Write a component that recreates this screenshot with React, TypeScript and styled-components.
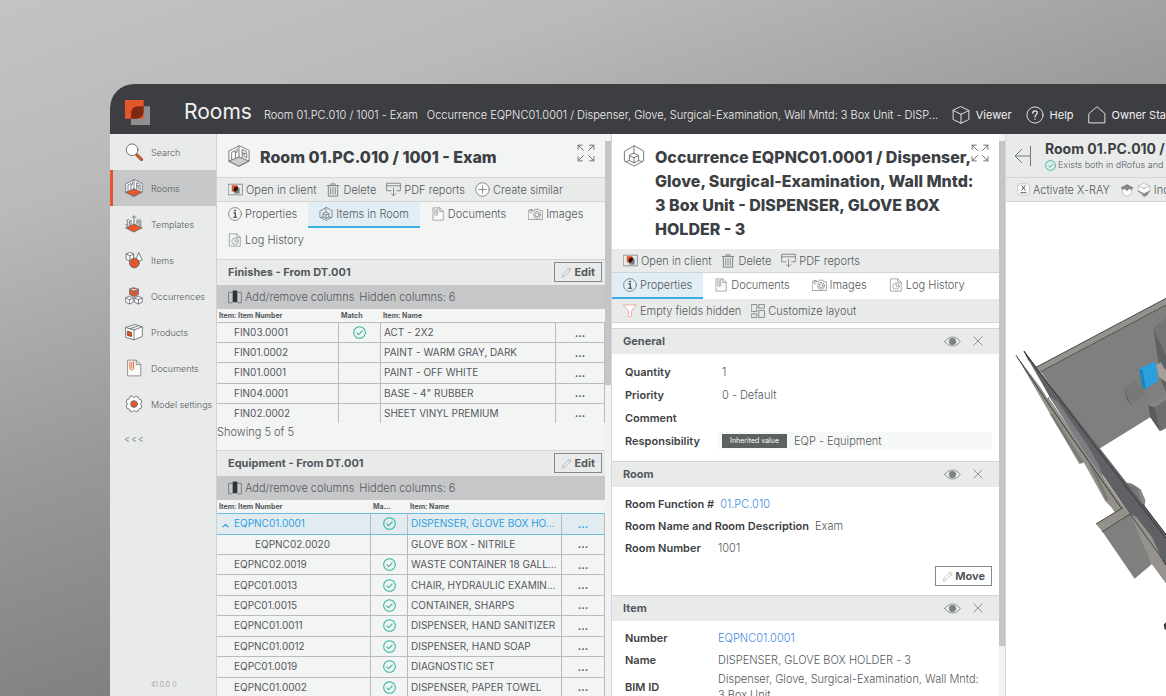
import React from "react";
import styled, { createGlobalStyle, css } from "styled-components";

const c = {
  ink: "#3c3f43",
  text: "#54585c",
  light: "#f3f4f4",
  bar: "#e9ebeb",
  strong: "#c6c7c9",
  line: "#d3d5d5",
  orange: "#e5572a",
  blue: "#2f9fe0",
  link: "#3f8ae0",
  green: "#2fb59c",
};

const Global = createGlobalStyle`
  * { box-sizing: border-box; }
  body {
    margin: 0;
    font-family: Inter, "Liberation Sans", sans-serif;
    font-size: 11px;
    font-weight: 300;
    color: ${c.text};
    overflow: hidden;
  }
  h1, h2, h3, p, dl, dd, dt { margin: 0; }
  button { font: inherit; color: inherit; background: none; border: 0; padding: 0; }
  a { text-decoration: none; color: inherit; }
  svg { display: block; flex: none; }
`;

const Backdrop = styled.div`
  height: 100vh;
  padding: 84px 0 0 110px;
  background: linear-gradient(161deg, #c3c3c3, #bababa 19%, #999 44%, #808080 67%, #606060);
`;
const Window = styled.main`
  height: 100%;
  display: flex;
  flex-direction: column;
  border-top-left-radius: 24px;
  overflow: hidden;
  background: ${c.light};
`;

/* Header */
const Header = styled.header`
  flex: none;
  height: 50px;
  padding: 12px 0 0 15px;
  display: flex;
  align-items: center;
  background: #3d3e41;
  color: #f1f1f1;
  font-size: 11px;
  font-weight: 400;
  white-space: nowrap;
`;
const Brand = styled.div`
  display: flex;
  align-items: center;
  gap: 34px;
  padding-bottom: 6px;
  margin-right: 12px;
`;
const AppName = styled.h1`
  font-size: 21px;
  line-height: 24px;
  font-weight: 400;
`;
const Crumb = styled.a<{ $grow?: boolean }>`
  margin-right: 9px;
  line-height: 16px;
  font-weight: 300;
  ${(p) =>
    p.$grow &&
    css`
      flex: 1 1 0;
      min-width: 0;
    `}
`;
const HeaderNav = styled.nav`
  flex: none;
  display: flex;
  gap: 14px;
`;
const HeaderLink = styled.a`
  display: flex;
  align-items: center;
  gap: 6px;
`;

/* Body */
const Body = styled.div`
  flex: 1;
  min-height: 0;
  display: grid;
  grid-template-columns: 107px minmax(0, 395fr) minmax(0, 394fr) minmax(0, 160fr);
  grid-template-rows: minmax(0, 1fr);
`;
const Sidebar = styled.nav`
  display: flex;
  flex-direction: column;
  background: ${c.bar};
  font-size: 9px;
  border-right: 1px solid #cfd0d1;
`;
const SideLink = styled.a<{ $active?: boolean }>`
  height: 36px;
  padding-left: 12px;
  border-left: 3px solid ${(p) => (p.$active ? c.orange : "transparent")};
  background: ${(p) => (p.$active ? c.strong : "none")};
  display: flex;
  align-items: center;
  gap: 8px;
  white-space: nowrap;
`;
const Collapse = styled.button`
  align-self: flex-start;
  margin: 8px 0 0 14px;
  line-height: 18px;
  letter-spacing: 1px;
`;
const Version = styled.p`
  margin: auto 0 6px 41px;
  font-size: 7px;
  line-height: 10px;
  color: #8f9294;
`;

const Panel = styled.section<{ $white?: boolean }>`
  position: relative;
  display: flex;
  min-height: 0;
  overflow: hidden;
  background: ${(p) => (p.$white ? "#fff" : c.light)};
`;
const PanelContent = styled.div`
  flex: 1;
  min-width: 0;
`;
const Track = styled.div`
  flex: none;
  width: 7px;
  padding-top: 7px;
  background: #f1f2f2;
  border-right: 1px solid #d5d6d7;
`;
const Thumb = styled.div<{ $size: number }>`
  height: ${(p) => p.$size}%;
  background: #c3c5c6;
`;
const TitleRow = styled.div<{ $ruled?: boolean }>`
  display: flex;
  align-items: flex-start;
  gap: 10px;
  padding: 11px 20px 8px 11px;
  ${(p) => p.$ruled && `border-bottom: 1px solid ${c.line};`}
`;
const Title = styled.h2`
  font-size: 16px;
  line-height: 24px;
  font-weight: 800;
  color: ${c.ink};
`;
const Expand = styled.button`
  position: absolute;
  top: 10px;
  right: 17px;
`;
const Toolbar = styled.div`
  height: 24px;
  padding: 0 11px;
  display: flex;
  align-items: center;
  gap: 10px;
  background: ${c.bar};
  border-bottom: 1px solid ${c.line};
  white-space: nowrap;
`;
const Tool = styled.button`
  display: flex;
  align-items: center;
  gap: 3px;
`;
const Tabs = styled.div<{ $last?: boolean }>`
  display: flex;
  flex-wrap: wrap;
  ${(p) => !p.$last && "padding-bottom: 5px;"}
`;
const Tab = styled.button<{ $active?: boolean }>`
  height: 26px;
  padding: 0 11px;
  display: flex;
  align-items: center;
  gap: 3px;
  border-bottom: 2px solid ${(p) => (p.$active ? "#3aaee0" : "transparent")};
  background: ${(p) => (p.$active ? "#e1eef5" : "none")};
`;
const SectionHead = styled.div`
  height: 26px;
  padding: 0 3px 1px 11px;
  display: flex;
  align-items: center;
  justify-content: space-between;
  background: ${c.bar};
  border-top: 1px solid ${c.line};
`;
const SectionTitle = styled.h3`
  font-size: 11px;
  font-weight: 700;
`;
const Outlined = styled.button<{ $white?: boolean }>`
  height: 20px;
  padding: 0 6px;
  display: flex;
  align-items: center;
  gap: 2px;
  border: 1px solid #85898b;
  background: ${(p) => (p.$white ? "#fff" : "none")};
  font-weight: 700;
`;
const ColumnBar = styled.div`
  height: 24px;
  padding: 0 11px;
  display: flex;
  align-items: center;
  gap: 5px;
  background: ${c.strong};
`;

/* Table */
const Grid = styled.table<{ $height: number }>`
  width: 100%;
  height: ${(p) => p.$height}px;
  table-layout: fixed;
  border-collapse: separate;
  border-spacing: 0;
  font-size: 10px;
  font-weight: 400;
`;
const Th = styled.th`
  height: 13px;
  padding: 0 2px;
  font-size: 7px;
  line-height: 12px;
  font-weight: 700;
  text-align: left;
  white-space: nowrap;
`;
const Td = styled.td<{ $kind?: "code" | "child" | "mid" }>`
  padding: 0 0 1px 3px;
  border-top: 1px solid #b9bbbc;
  border-right: 1px solid #b9bbbc;
  line-height: 16px;
  white-space: nowrap;
  ${(p) => p.$kind === "code" && "padding-left: 17px;"}
  ${(p) => p.$kind === "child" && "padding-left: 38px;"}
  ${(p) => p.$kind === "mid" && "padding: 0; text-align: center; svg { margin: 0 auto; }"}
`;
const More = styled.button`
  font-size: 11px;
  font-weight: 600;
`;
const Tr = styled.tr<{ $selected?: boolean }>`
  ${(p) =>
    p.$selected &&
    css`
      background: #e1ebf0;
      color: ${c.blue};
      ${Td} {
        border-top-color: #6dbbe4;
        border-bottom: 1px solid #6dbbe4;
      }
      & + tr ${Td} {
        border-top: 0;
      }
    `}
`;
const Toggle = styled.button`
  float: left;
  margin: 7px 0 0 -12px;
`;
const Count = styled.p`
  margin-bottom: 9px;
  line-height: 18px;
`;

/* Fields */
const Spacer = styled.div`
  height: 5px;
`;
const HeadActions = styled.div`
  display: flex;
  align-items: center;
  gap: 12px;
  padding-right: 13px;
`;
const Fields = styled.dl<{ $row: number }>`
  padding: 6px 7px 0 13px;
  --row: ${(p) => p.$row}px;
`;
const Field = styled.div`
  min-height: var(--row);
  display: flex;
  align-items: center;
  gap: 6px;
`;
const Label = styled.dt`
  min-width: 87px;
  font-weight: 600;
  font-size: 11px;
  color: ${c.ink};
  white-space: nowrap;
`;
const Value = styled.dd<{ $inset?: boolean; $tint?: boolean }>`
  flex: 1;
  line-height: 16px;
  display: flex;
  align-items: center;
  gap: 7px;
  padding-right: 8px;
  ${(p) => p.$inset && "padding: 1px 4px;"}
  ${(p) => p.$tint && "background: #f7f8f8;"}
`;
const Link = styled.a`
  color: ${c.link};
`;
const Badge = styled.span`
  padding: 0 8px;
  background: #5b6260;
  color: #fff;
  font-size: 7px;
  font-weight: 400;
  line-height: 14px;
`;
const Actions = styled.div`
  display: flex;
  justify-content: flex-end;
  padding: 7px 7px 9px;
`;
const Bottom = styled.div<{ $h: number }>`
  height: ${(p) => p.$h}px;
`;

/* Viewer */
const ViewerPanel = styled.section`
  min-height: 0;
  overflow: hidden;
  background: #fff;
  white-space: nowrap;
`;
const ViewerHead = styled.div`
  height: 44px;
  padding: 6px 0 0 8px;
  display: flex;
  gap: 14px;
  background: ${c.bar};
  border-bottom: 1px solid ${c.line};
`;
const BackButton = styled.button`
  align-self: flex-start;
  margin-top: 5px;
`;
const ViewerTitle = styled.h2`
  font-size: 14px;
  line-height: 18px;
  font-weight: 700;
  color: ${c.ink};
`;
const Status = styled.p`
  display: flex;
  align-items: center;
  gap: 2px;
  font-size: 9px;
  line-height: 14px;
`;

/* Icons */
type IconProps = { s?: number; children?: React.ReactNode; color?: string; w?: number };
const Svg = ({ s = 14, w = 1.2, color = "#6b6f73", children }: IconProps) => (
  <svg
    width={s}
    height={s}
    viewBox="0 0 24 24"
    fill="none"
    stroke={color}
    strokeWidth={w}
    strokeLinejoin="round"
    strokeLinecap="round"
    aria-hidden="true"
  >
    {children}
  </svg>
);
const RoomIcon = ({ s = 22, floor = "#c9cbcc" }: { s?: number; floor?: string }) => (
  <Svg s={s} w={s > 20 ? 1 : 1.1}>
    <path d="M12 1 1 6.5v11l11 5.500 11-5.500v-11z" fill="#fff" />
    <path d="m1 17.500 11-4.500 11 4.500L12 23z" fill={floor} />
    <path d="M12 1v12M4 16.200V8l4-2v8.500M8 8.500l2-1V4M15.500 13.500V5l4.500 2.200v2.500l-4.500-1.200M17.500 9.500v3l3 1.500v-4" />
  </Svg>
);
const TemplateIcon = () => (
  <Svg s={18} w={1.1}>
    <path d="M1 17 12 12l11 5-11 5.500z" fill={c.orange} />
    <path d="M12 13V1.500M9.500 3.500 12 1l2.500 2.500M3 14V7M1 12.500l2 2.500M8 12.500V7l-2 1v5.500M3 7l2-1.200M16 12V6.500l3 1.500v2l-2-.8M18.500 11v2l2.500 1M21 14V7l-2-1.200" />
  </Svg>
);
const ItemsIcon = () => (
  <Svg s={18} w={1.2}>
    <path d="M6.500 2 1.500 4v7l5 2.500 5-2.500V4zM1.500 4l5 2.500 5-2.500M6.500 6.500v7" fill="#fff" />
    <path d="M18 2.500 14.500 12c2 1.500 6 1.500 8 0z" fill="#fff" />
    <circle cx="12.500" cy="16" r="6.500" fill={c.orange} />
  </Svg>
);
const cube = (x: number, y: number) =>
  `M${x} ${y}l5 2.200v5.600l-5 2.400-5-2.400v-5.600zM${x - 5} ${y + 2.2}l5 2.300 5-2.300M${x} ${y + 4.5}v5.700`;
const OccurrencesIcon = () => (
  <Svg s={18} w={1.1}>
    <path d={cube(6, 12.5)} fill="#fff" />
    <path d={cube(18, 12.5)} fill="#fff" />
    <path d="M12 1l6 2v7l-6 2.800L6 10V3zM6 3l6 2.500L18 3M12 5.500v7.300" fill={c.orange} />
  </Svg>
);
const ProductIcon = () => (
  <Svg s={18} w={1.2}>
    <path d="M1 6 13 2l10 3v13l-11 4.500L1 19zM1 6l11 3.500L23 5M12 9.500v13M6.500 7.700 18 3.500" fill="#fff" />
    <path d="m3.500 11 5 1.500v5.500l-5-1.500z" fill={c.orange} stroke="#8a3013" />
  </Svg>
);
const DocIcon = ({ s = 14, clip = "#8a8e91" }: { s?: number; clip?: string }) => (
  <Svg s={s} w={1.2} color="#85898c">
    <path d="M4 1.500h11l6 6v15H4zM15 1.500v6h6" fill="#fbfbfb" />
    <path d="M6.500 4v8c0 3.500 5 3.500 5 0V3M9 12V4.500" stroke={clip} />
  </Svg>
);
const GearIcon = () => (
  <Svg s={18} w={1.2}>
    <path
      d="M9.500 1.500c.8 1.200 1.600 1.500 2.500 1.500s1.700-.3 2.500-1.500l3.500 1.500c-.3 2.500.8 3.300 3.200 3l1.300 3.300c-2 1.500-2 4 0 5.400L21.200 18c-2.400-.3-3.500.5-3.200 3l-3.500 1.500c-.8-1.200-1.600-1.500-2.500-1.500s-1.700.3-2.500 1.500L6 21c.3-2.500-.8-3.300-3.200-3l-1.300-3.300c2-1.400 2-3.900 0-5.400L2.800 6c2.400.3 3.500-.5 3.200-3z"
      fill="#fff"
    />
    <circle cx="12" cy="12" r="4.500" fill={c.orange} />
  </Svg>
);
const SearchIcon = () => (
  <Svg s={18} w={1.3}>
    <path d="m16 16 6 6" stroke="#6b3423" strokeWidth="4" />
    <path d="m16 16 6 6" stroke={c.orange} strokeWidth="2.800" />
    <circle cx="9.500" cy="9" r="7.800" fill="#fff" />
  </Svg>
);
const OccurrenceIcon = ({ s = 22 }: { s?: number }) => (
  <Svg s={s} w={s > 20 ? 1 : 1.3}>
    <path d="M12 1 1.500 7v10.500L12 23l10.500-5.500V7z" />
    <path d="m12 9 5 2.500v5.500l-5 2.500L7 17v-5.500zM7 11.500l5 2.500 5-2.500M12 14v5.500M12 1v8M7 17l-4 1M17 17l4 1" />
  </Svg>
);
const ClientIcon = () => (
  <Svg s={15} w={1.1}>
    <path d="M1 3.500h22v17H1z" />
    <path d="M6 5h9v10H6z" fill={c.orange} stroke="none" />
    <path d="M10 9h8.500v9.500H10z" fill="#77797b" stroke="none" />
    <path d="M9 15V12c0-3 2-5 7-5 0 5.500-1.500 8-7 8z" fill="#2c1008" stroke="none" />
  </Svg>
);
const TrashIcon = () => (
  <Svg s={14} w={1.4}>
    <path d="M2 4.500h20M8.500 4V1.500h7V4M4 4.500v18h16v-18M8 8v11M12 8v11M16 8v11" />
  </Svg>
);
const PdfIcon = () => (
  <Svg s={15} w={1.2}>
    <path d="M8 14H1V2h22v12h-6M1 6h22M12 10v12M8.500 18.500 12 22l3.500-3.500" />
  </Svg>
);
const PlusIcon = () => (
  <Svg s={15} w={1.2}>
    <circle cx="12" cy="12" r="10.800" fill="#fbfbfb" />
    <path d="M12 6v12M6 12h12" />
  </Svg>
);
const InfoIcon = () => (
  <Svg s={14} w={1.3}>
    <circle cx="12" cy="12" r="11" />
    <path d="M10 10h2.500v7M9.500 17.500h5.500" stroke={c.ink} strokeWidth="2" />
    <circle cx="12" cy="6.200" r="1" fill={c.ink} stroke={c.ink} />
  </Svg>
);
const CameraIcon = () => (
  <Svg s={15} w={1.2} color="#85898c">
    <path d="M1 6h9l1.500-2.500h6L19 6h4v14H1zM3 6V4h4v2M3.500 9h2" />
    <circle cx="14.500" cy="12.500" r="5.500" />
    <circle cx="14.500" cy="12.500" r="3" />
  </Svg>
);
const LogIcon = () => (
  <Svg s={14} w={1.2} color="#85898c">
    <path d="M3 1.500h12l6 6v15H3zM15 1.500v6h6" />
    <circle cx="12" cy="14" r="5.500" />
    <path d="M12 11v3.500h2.500" />
  </Svg>
);
const PencilIcon = () => (
  <Svg s={11} w={1.3} color="#9da1a3">
    <path d="M3 21.500 5 15 17.500 2.500c2-1.500 5.500 2 4 4L9 19z" />
    <path d="m15.500 4.500 4 4" />
  </Svg>
);
const ColumnsIcon = () => (
  <Svg s={14} w={1.4}>
    <path d="M7 4H1v18h6M17 4h6v18h-6" />
    <path d="M8 1h8v20H8z" fill="#2f3235" stroke="none" />
  </Svg>
);
const CheckIcon = ({ s = 13 }: { s?: number }) => (
  <Svg s={s} w={1.9} color={c.green}>
    <circle cx="12" cy="12" r="10.800" />
    <path d="m7 12.500 3.500 3.500 6.500-7" />
  </Svg>
);
const FunnelIcon = () => (
  <Svg s={14} w={1.3} color="#ec9d8a">
    <path d="M1 1.500h22L14.500 12v9l-5 1.500V12z" fill="#fdfdfd" />
  </Svg>
);
const LayoutIcon = () => (
  <Svg s={14} w={1.3}>
    <path d="M1 1h9v12H1zM14 1h9v6h-9zM1 17h9v6H1zM14 11h9v12h-9z" />
  </Svg>
);
const EyeIcon = () => (
  <Svg s={17} w={1.2} color="#7d8184">
    <path d="M1 12c6-8.500 16-8.500 22 0-6 8.500-16 8.500-22 0z" />
    <circle cx="12" cy="12" r="4.500" fill="#7d8184" />
  </Svg>
);
const CloseIcon = () => (
  <Svg s={10} w={2} color="#7d8184">
    <path d="m2 2 20 20M22 2 2 22" />
  </Svg>
);
const ExpandIcon = () => (
  <Svg s={18} w={1.3}>
    <path d="M1.500 7V1.500H7M1.500 1.500l7 7M17 1.500h5.500V7M22.500 1.500l-7 7M1.500 17v5.500H7M1.500 22.500l7-7M17 22.500h5.500V17M22.500 22.500l-7-7" />
  </Svg>
);
const BackIcon = () => (
  <svg width="17" height="22" viewBox="0 0 17 22" fill="none" stroke="#73777a" aria-hidden="true">
    <path d="M16.500 1v20M16 11H1M8 4l-7 7 7 7" />
  </svg>
);
const XrayIcon = () => (
  <Svg s={13} w={1.2} color="#b4b7b9">
    <path d="M4 1.500h16l3 5v11l-3 5H4l-3-5v-11z" fill="#fbfbfb" />
    <path d="m9 5 6 8M15 5l-6 8M7 18h10" stroke={c.ink} strokeWidth="1.600" />
  </Svg>
);
const LayersTopIcon = () => (
  <Svg s={14} w={1} color="#a4a7a9">
    <path d="M4 10v8l8 5 8-5v-8z" fill="#fdfdfd" />
    <path d="m12 2 11 5.500-4 5-3-2.500-4 4-4-4-3 2.500-4-5z" fill="#85888a" stroke="none" />
  </Svg>
);
const LayersBottomIcon = () => (
  <Svg s={14} w={1} color="#a4a7a9">
    <path d="m1 14 11-5 11 5-4 4v2l-7 4-4-5z" fill="#85888a" stroke="none" />
    <path d="m12 1 10 4v8l-10 5-10-5V5zM2 5l10 5 10-5" fill="#fdfdfd" />
  </Svg>
);
const Logo = () => (
  <svg width="25" height="25" viewBox="0 0 75 75" aria-hidden="true">
    <path d="M18 19h57v56H18z" fill="#908e8e" />
    <path d="M0 0h56v56H0z" fill={c.orange} />
    <path d="M18 56V42c0-14 8-23 22-23h16v14c0 14-8 23-22 23z" fill="#7d2a12" />
  </svg>
);

const Scene = () => (
  <svg width="160" height="494" viewBox="30 -234 480 1482" role="img" aria-label="3D model of the room">
    <path d="M120 262 510 55v20L135 276z" fill="#94928d" />
    <path d="M135 276 510 76v310L465 410 305 509z" fill="#7f7f7e" />
    <path d="M120 262 510 55M133 276 510 75" stroke="#4a4a48" strokeWidth="3" />
    <path d="m472 145 38 80v110l-14-30z" fill="#5f6163" />
    <path d="m472 145 38-30v110z" fill="#747573" />
    <path d="m384 325 34-22 22 22 10 20-46 30-10-22z" fill="#787877" />
    <path d="m384 325 10 25 12 26-14-18z" fill="#5d5e5e" />
    <path d="m430 266 42-20 8 4 7 52-40 26-8-5z" fill="#2d9fdc" />
    <path d="m430 266 10 4 9 58-10-5z" fill="#1f83bd" />
    <path d="m480 255 14-8 10 16 6 8v34l-22-14z" fill="#a39f9b" />
    <path d="m457 375 53-30v100l-18 9-30-44z" fill="#6d6e6e" />
    <path d="m457 375 18 7 17 72-30-44z" fill="#5a5b5c" />
    <path d="m457 375 53-30v15l-35 22z" fill="#858583" />
    <path d="m368 606 38 4 28 18 14 32-4 30-34 12z" fill="#888886" />
    <path d="m400 612 26 12 8 34-30 14z" fill="#777776" />
    <path d="m445 680 65 88v30l-80-102z" fill="#8f8d89" />
    <path d="M84 213 122 262 378 590 510 762v92L385 680 160 350z" fill="#606164" />
    <path d="M60 226 158 354 384 680 510 850v60L346 682l-18-18-64-116-14 4z" fill="#94918b" />
    <path d="m160 350 24 14 90 130 34 60 14 40-60-84z" fill="#7b7d80" />
    <path d="M60 226 160 375l220 315 130 165M84 213l36 50 186 247 204 265" stroke="#35373a" strokeWidth="3" fill="none" />
    <path d="M84 213 158 354M440 672l70 92" stroke="#35373a" strokeWidth="3" />
    <path d="m82 236 18 8 60 106-6 5z" fill="#fff" />
    <path d="m160 400 92 150 10-5-90-140z" fill="#7c7a75" />
    <path d="m280 555 50 108 8-4-36-80z" fill="#7c7a75" />
    <path d="m300 732 82-50 20 20-82 54z" fill="#94918b" />
    <path d="m320 756 82-54 66 150-52 44z" fill="#7f7f7e" />
    <path d="m402 702 20 10 46 60 42 92v45l-42-56z" fill="#96938e" />
    <path d="m300 732 82-50M318 756l84-54M402 702l108 150" stroke="#444543" strokeWidth="3" />
    <path d="m510 1026-7 8 2 12 5 4z" fill="#3d3f41" />
  </svg>
);

const ExpandButton = () => (
  <Expand aria-label="Expand">
    <ExpandIcon />
  </Expand>
);

type Row = { code: string; name: string; match?: boolean; child?: boolean; selected?: boolean };

const finishes: Row[] = [
  { code: "FIN03.0001", name: "ACT - 2X2", match: true },
  { code: "FIN01.0002", name: "PAINT - WARM GRAY, DARK" },
  { code: "FIN01.0001", name: "PAINT - OFF WHITE" },
  { code: "FIN04.0001", name: 'BASE - 4" RUBBER' },
  { code: "FIN02.0002", name: "SHEET VINYL PREMIUM" },
];
const equipment: Row[] = [
  { code: "EQPNC01.0001", name: "DISPENSER, GLOVE BOX HO...", match: true, selected: true },
  { code: "EQPNC02.0020", name: "GLOVE BOX - NITRILE", child: true },
  { code: "EQPNC02.0019", name: "WASTE CONTAINER 18 GALL...", match: true },
  { code: "EQPC01.0013", name: "CHAIR, HYDRAULIC EXAMIN...", match: true },
  { code: "EQPC01.0015", name: "CONTAINER, SHARPS", match: true },
  { code: "EQPNC01.0011", name: "DISPENSER, HAND SANITIZER", match: true },
  { code: "EQPNC01.0012", name: "DISPENSER, HAND SOAP", match: true },
  { code: "EQPC01.0019", name: "DIAGNOSTIC SET", match: true },
  { code: "EQPNC01.0002", name: "DISPENSER, PAPER TOWEL", match: true },
];

type TableProps = { title: string; rows: Row[]; cols: number[]; height: number; match: string };
const TableSection = ({ title, rows, cols, height, match }: TableProps) => (
  <>
    <SectionHead>
      <SectionTitle>{title}</SectionTitle>
      <Outlined>
        <PencilIcon />
        Edit
      </Outlined>
    </SectionHead>
    <ColumnBar>
      <Tool>
        <ColumnsIcon />
        Add/remove columns
      </Tool>
      <span>Hidden columns: 6</span>
    </ColumnBar>
    <Grid $height={height}>
      <colgroup>
        <col style={{ width: cols[0] }} />
        <col style={{ width: cols[1] }} />
        <col />
        <col style={{ width: cols[2] }} />
      </colgroup>
      <thead>
        <tr>
          <Th>Item: Item Number</Th>
          <Th>{match}</Th>
          <Th>Item: Name</Th>
          <Th aria-label="Actions" />
        </tr>
      </thead>
      <tbody>
        {rows.map((r) => (
          <Tr key={r.code} $selected={r.selected}>
            <Td $kind={r.child ? "child" : "code"}>
              {r.selected && (
                <Toggle aria-label="Collapse row">
                  <Svg s={7} w={4} color={c.blue}>
                    <path d="m3 17 9-9 9 9" />
                  </Svg>
                </Toggle>
              )}
              {r.code}
            </Td>
            <Td $kind="mid">{r.match && <CheckIcon />}</Td>
            <Td>{r.name}</Td>
            <Td $kind="mid">
              <More aria-label={`Actions for ${r.code}`}>...</More>
            </Td>
          </Tr>
        ))}
      </tbody>
    </Grid>
  </>
);

const FieldHead = ({ title }: { title: string }) => (
  <SectionHead>
    <SectionTitle>{title}</SectionTitle>
    <HeadActions>
      <button aria-label={`Show ${title}`}>
        <EyeIcon />
      </button>
      <button aria-label={`Close ${title}`}>
        <CloseIcon />
      </button>
    </HeadActions>
  </SectionHead>
);

const sideItems: [string, React.ReactNode][] = [
  ["Search", <SearchIcon />],
  ["Rooms", <RoomIcon s={18} floor={c.orange} />],
  ["Templates", <TemplateIcon />],
  ["Items", <ItemsIcon />],
  ["Occurrences", <OccurrencesIcon />],
  ["Products", <ProductIcon />],
  ["Documents", <DocIcon s={18} clip={c.orange} />],
  ["Model settings", <GearIcon />],
];

export default function App() {
  return (
    <Backdrop>
      <Global />
      <Window>
        <Header>
          <Brand>
            <Logo />
            <AppName>Rooms</AppName>
          </Brand>
          <Crumb href="#room">Room 01.PC.010 / 1001 - Exam</Crumb>
          <Crumb href="#occurrence" $grow>
            Occurrence EQPNC01.0001 / Dispenser, Glove, Surgical-Examination, Wall Mntd: 3 Box Unit - DISP...
          </Crumb>
          <HeaderNav>
            <HeaderLink href="#viewer">
              <Svg s={18} color="#f1f1f1">
                <path d="m12 1 10.500 5v12L12 23 1.500 18V6zM1.500 6 12 11l10.500-5M12 11v12" />
              </Svg>
              Viewer
            </HeaderLink>
            <HeaderLink href="#help">
              <Svg s={18} color="#f1f1f1">
                <circle cx="12" cy="12" r="10.800" />
                <path d="M9 9.500c0-4 6-4 6-.5 0 2.500-3 2.500-3 5.500M12 17.500v.5" strokeWidth="1.600" />
              </Svg>
              Help
            </HeaderLink>
            <HeaderLink href="#owner">
              <Svg s={18} color="#f1f1f1">
                <path d="M1.500 10 12 1l10.500 9v12.500h-21z" />
              </Svg>
              Owner Sta
            </HeaderLink>
          </HeaderNav>
        </Header>
        <Body>
          <Sidebar>
            {sideItems.map(([label, icon]) => (
              <SideLink key={label} href={`#${label}`} $active={label === "Rooms"}>
                {icon}
                {label}
              </SideLink>
            ))}
            <Collapse>{"<<<"}</Collapse>
            <Version>41.0.0 ()</Version>
          </Sidebar>

          <Panel>
            <PanelContent>
              <TitleRow $ruled>
                <RoomIcon />
                <Title>Room 01.PC.010 / 1001 - Exam</Title>
              </TitleRow>
              <ExpandButton />
              <Toolbar>
                <Tool><ClientIcon />Open in client</Tool>
                <Tool><TrashIcon />Delete</Tool>
                <Tool><PdfIcon />PDF reports</Tool>
                <Tool><PlusIcon />Create similar</Tool>
              </Toolbar>
              <Tabs>
                <Tab><InfoIcon />Properties</Tab>
                <Tab $active><OccurrenceIcon s={14} />Items in Room</Tab>
                <Tab><DocIcon />Documents</Tab>
                <Tab><CameraIcon />Images</Tab>
                <Tab><LogIcon />Log History</Tab>
              </Tabs>
              <TableSection title="Finishes - From DT.001" rows={finishes} cols={[122, 42, 49]} height={114} match="Match" />
              <Count>Showing 5 of 5</Count>
              <TableSection title="Equipment - From DT.001" rows={equipment} cols={[154, 37, 43]} height={197} match="Ma..." />
            </PanelContent>
            <Track>
              <Thumb $size={44} />
            </Track>
          </Panel>

          <Panel $white>
            <PanelContent>
              <TitleRow>
                <OccurrenceIcon />
                <Title>
                  Occurrence EQPNC01.0001 / Dispenser, Glove, Surgical-Examination, Wall Mntd: 3 Box Unit - DISPENSER, GLOVE BOX HOLDER - 3
                </Title>
              </TitleRow>
              <ExpandButton />
              <Toolbar>
                <Tool><ClientIcon />Open in client</Tool>
                <Tool><TrashIcon />Delete</Tool>
                <Tool><PdfIcon />PDF reports</Tool>
              </Toolbar>
              <Tabs $last>
                <Tab $active><InfoIcon />Properties</Tab>
                <Tab><DocIcon />Documents</Tab>
                <Tab><CameraIcon />Images</Tab>
                <Tab><LogIcon />Log History</Tab>
              </Tabs>
              <Toolbar>
                <Tool><FunnelIcon />Empty fields hidden</Tool>
                <Tool><LayoutIcon />Customize layout</Tool>
              </Toolbar>
              <Spacer />
              <FieldHead title="General" />
              <Fields $row={23}>
                <Field><Label>Quantity</Label><Value $inset>1</Value></Field>
                <Field><Label>Priority</Label><Value $inset>0 - Default</Value></Field>
                <Field><Label>Comment</Label></Field>
                <Field>
                  <Label>Responsibility</Label>
                  <Value $inset $tint><Badge>Inherited value</Badge>EQP - Equipment</Value>
                </Field>
              </Fields>
              <Bottom $h={9} />
              <FieldHead title="Room" />
              <Fields $row={22}>
                <Field><Label>Room Function #</Label><Value><Link href="#function">01.PC.010</Link></Value></Field>
                <Field><Label>Room Name and Room Description</Label><Value>Exam</Value></Field>
                <Field><Label>Room Number</Label><Value>1001</Value></Field>
              </Fields>
              <Actions>
                <Outlined $white><PencilIcon />Move</Outlined>
              </Actions>
              <FieldHead title="Item" />
              <Fields $row={22}>
                <Field><Label>Number</Label><Value><Link href="#item">EQPNC01.0001</Link></Value></Field>
                <Field><Label>Name</Label><Value>DISPENSER, GLOVE BOX HOLDER - 3</Value></Field>
                <Field><Label>BIM ID</Label><Value>Dispenser, Glove, Surgical-Examination, Wall Mntd: 3 Box Unit</Value></Field>
              </Fields>
            </PanelContent>
            <Track>
              <Thumb $size={91} />
            </Track>
          </Panel>

          <ViewerPanel>
            <ViewerHead>
              <BackButton aria-label="Back"><BackIcon /></BackButton>
              <div>
                <ViewerTitle>Room 01.PC.010 /</ViewerTitle>
                <Status><CheckIcon s={11} />Exists both in dRofus and I</Status>
              </div>
            </ViewerHead>
            <Toolbar>
              <Tool><XrayIcon />Activate X-RAY</Tool>
              <Tool><LayersTopIcon /><LayersBottomIcon />Inc</Tool>
            </Toolbar>
            <Scene />
          </ViewerPanel>
        </Body>
      </Window>
    </Backdrop>
  );
}
